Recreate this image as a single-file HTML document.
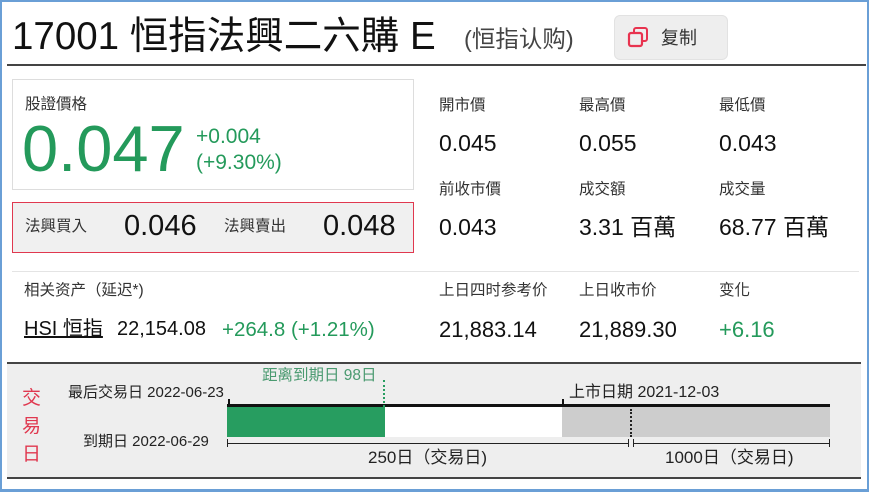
<!DOCTYPE html>
<html><head><meta charset="utf-8"><style>
*{margin:0;padding:0;box-sizing:border-box}
body{width:869px;height:492px;background:#fff;font-family:"Liberation Sans","Noto Sans CJK TC",sans-serif;position:relative;overflow:hidden;color:#111;line-height:1.15}
.a{position:absolute;white-space:nowrap}
.lbl{font-size:15.5px;color:#333}
.val{font-size:23px;color:#111}
.g{color:#249a5b}
</style></head><body>
<div class="a" style="left:0;top:0;width:869px;height:492px;border:2px solid #6a9fd6;border-bottom-width:3px"></div>
<div class="a" style="left:12px;top:15px;font-size:38.5px;line-height:44px;color:#111">17001 恒指法興二六購 E</div>
<div class="a" style="left:464px;top:26px;font-size:23.5px;color:#444">(恒指认购)</div>
<div class="a" style="left:614px;top:15px;width:114px;height:45px;background:#eee;border:1px solid #e2e2e2;border-radius:6px"></div>
<svg class="a" style="left:627px;top:26px" width="26" height="24" viewBox="0 0 26 24"><rect x="7" y="2" width="13" height="13" rx="2" fill="none" stroke="#e8334f" stroke-width="2"/><rect x="2" y="7" width="13" height="13" rx="2" fill="#eee" stroke="#e8334f" stroke-width="2.2"/></svg>
<div class="a" style="left:661px;top:28px;font-size:18px;color:#333">复制</div>
<div class="a" style="left:7px;top:64px;width:859px;height:2px;background:#444"></div>

<div class="a" style="left:12px;top:79px;width:402px;height:111px;border:1px solid #ddd"></div>
<div class="a lbl" style="left:25px;top:96px">股證價格</div>
<div class="a g" style="left:22px;top:112px;font-size:65px;line-height:74px">0.047</div>
<div class="a g" style="left:196px;top:125px;font-size:21px">+0.004</div>
<div class="a g" style="left:196px;top:151px;font-size:21px">(+9.30%)</div>

<div class="a" style="left:12px;top:202px;width:402px;height:51px;border:1px solid #e0384f;background:#f0f0f0"></div>
<div class="a lbl" style="left:25px;top:218px">法興買入</div>
<div class="a" style="left:124px;top:210px;font-size:29px">0.046</div>
<div class="a lbl" style="left:224px;top:218px">法興賣出</div>
<div class="a" style="left:323px;top:210px;font-size:29px">0.048</div>

<div class="a lbl" style="left:439px;top:97px">開市價</div>
<div class="a lbl" style="left:579px;top:97px">最高價</div>
<div class="a lbl" style="left:719px;top:97px">最低價</div>
<div class="a val" style="left:439px;top:130px">0.045</div>
<div class="a val" style="left:579px;top:130px">0.055</div>
<div class="a val" style="left:719px;top:130px">0.043</div>
<div class="a lbl" style="left:439px;top:181px">前收市價</div>
<div class="a lbl" style="left:579px;top:181px">成交額</div>
<div class="a lbl" style="left:719px;top:181px">成交量</div>
<div class="a val" style="left:439px;top:214px">0.043</div>
<div class="a val" style="left:579px;top:214px">3.31 百萬</div>
<div class="a val" style="left:719px;top:214px">68.77 百萬</div>

<div class="a" style="left:12px;top:271px;width:847px;height:1px;background:#e4e4e4"></div>
<div class="a lbl" style="left:24px;top:282px">相关资产（延迟*)</div>
<div class="a lbl" style="left:439px;top:282px">上日四时参考价</div>
<div class="a lbl" style="left:579px;top:282px">上日收市价</div>
<div class="a lbl" style="left:719px;top:282px">变化</div>
<div class="a" style="left:24px;top:318px;font-size:20px;text-decoration:underline">HSI 恒指</div>
<div class="a" style="left:117px;top:318px;font-size:20px">22,154.08</div>
<div class="a g" style="left:222px;top:318px;font-size:20.5px">+264.8 (+1.21%)</div>
<div class="a val" style="left:439px;top:317px;font-size:22px">21,883.14</div>
<div class="a val" style="left:579px;top:317px;font-size:22px">21,889.30</div>
<div class="a val g" style="left:719px;top:317px;font-size:22px">+6.16</div>

<div class="a" style="left:7px;top:362px;width:854px;height:117px;background:#eee;border-top:2px solid #444;border-bottom:2px solid #444"></div>
<div class="a" style="left:22px;top:385px;font-size:19px;line-height:28px;color:#e0384f;white-space:normal;width:22px">交<br>易<br>日</div>
<div class="a" style="left:68px;top:384px;font-size:15px;color:#222">最后交易日 2022-06-23</div>
<div class="a" style="left:83px;top:433px;font-size:15px;color:#222">到期日 2022-06-29</div>
<div class="a" style="left:262px;top:367px;font-size:15.5px;color:#4a9a70">距离到期日 98日</div>
<div class="a" style="left:569px;top:384px;font-size:16px;color:#222">上市日期 2021-12-03</div>
<div class="a" style="left:227px;top:404px;width:603px;height:3px;background:#111"></div>
<div class="a" style="left:228px;top:399px;width:2px;height:6px;background:#111"></div>
<div class="a" style="left:562px;top:399px;width:2px;height:6px;background:#111"></div>
<div class="a" style="left:227px;top:407px;width:158px;height:30px;background:#279d60"></div>
<div class="a" style="left:385px;top:407px;width:177px;height:30px;background:#fff"></div>
<div class="a" style="left:562px;top:407px;width:268px;height:30px;background:#cdcdcd"></div>
<div class="a" style="left:383px;top:380px;height:27px;border-left:2px dotted #279d60"></div>
<div class="a" style="left:630px;top:409px;height:28px;border-left:2px dotted #222"></div>
<div class="a" style="left:228px;top:443px;width:602px;height:1px;background:#222"></div>
<div class="a" style="left:227px;top:439px;width:1px;height:8px;background:#222"></div>
<div class="a" style="left:829px;top:439px;width:1px;height:8px;background:#222"></div>
<div class="a" style="left:628px;top:439px;width:6px;height:8px;background:#eee;border-left:1px solid #222;border-right:1px solid #222"></div>
<div class="a" style="left:368px;top:448px;font-size:17px;color:#222">250日（交易日)</div>
<div class="a" style="left:665px;top:448px;font-size:17px;color:#222">1000日（交易日)</div>
</body></html>
